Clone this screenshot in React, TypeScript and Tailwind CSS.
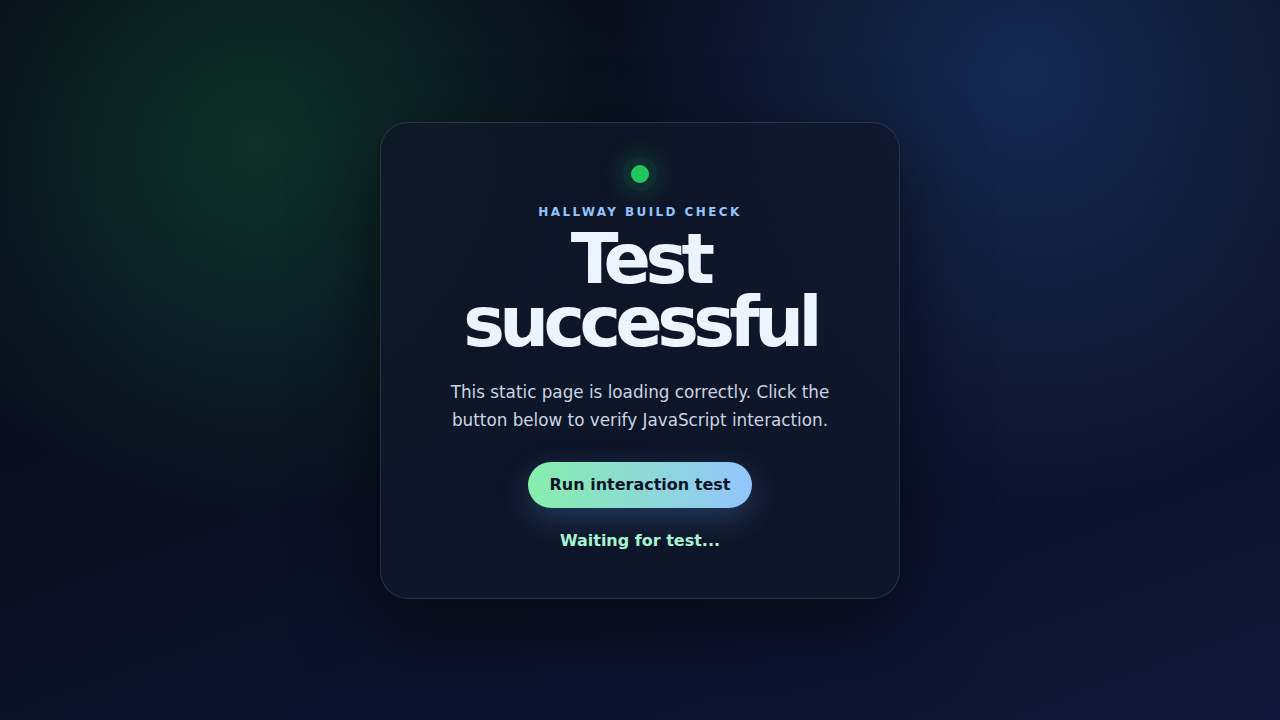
import React, { useState } from "react";

export default function App() {
  const [status, setStatus] = useState("Waiting for test...");
  return (
    <div
      className="relative flex min-h-screen w-full items-center justify-center overflow-hidden bg-[#0a0f1f] [font-family:'DejaVu_Sans',sans-serif]"
    >
      <div className="pointer-events-none absolute inset-0 bg-[radial-gradient(circle_at_20%_20%,rgba(34,197,94,0.2),transparent_32%),radial-gradient(circle_at_80%_10%,rgba(59,130,246,0.24),transparent_36%),linear-gradient(160deg,#070b16_0%,#0a0f22_50%,#10173a_100%)]" />
      <div className="relative flex w-[520px] flex-col items-center rounded-[28px] border border-[rgba(148,163,184,0.2)] bg-[rgba(15,23,42,0.82)] px-10 pb-[45px] pt-[34px] text-center shadow-[0_30px_80px_rgba(0,0,0,0.55)]">
        <div className="flex h-[34px] w-[34px] items-center justify-center rounded-full bg-[rgba(34,197,94,0.15)] shadow-[0_0_24px_rgba(34,197,94,0.25)]">
          <div className="h-[18px] w-[18px] rounded-full bg-[#22c55e]" />
        </div>
        <div className="mt-[12px] text-[12px] font-bold uppercase leading-[18px] tracking-[0.2em] text-[#93c5fd]">
          Hallway build check
        </div>
        <h1 className="mt-[7px] text-[70px] font-bold leading-[63px] tracking-[-0.08em] text-[#eef4ff]">
          Test
          <br />
          successful
        </h1>
        <p className="mt-[24px] max-w-[400px] text-[16.8px] leading-[28px] text-[#cbd5e1]">
          This static page is loading correctly. Click the button below to verify JavaScript interaction.
        </p>
        <button
          onClick={() => setStatus("JavaScript is working!")}
          className="mt-[28px] flex h-[46px] items-center rounded-full bg-[linear-gradient(90deg,#86efac,#93c5fd)] px-[22px] text-[16px] font-bold text-[#0b1324] shadow-[0_10px_30px_rgba(96,165,250,0.25)]"
        >
          Run interaction test
        </button>
        <div className="mt-[21px] text-[16px] font-bold leading-[24px] text-[#a7f3d0]">{status}</div>
      </div>
    </div>
  );
}
